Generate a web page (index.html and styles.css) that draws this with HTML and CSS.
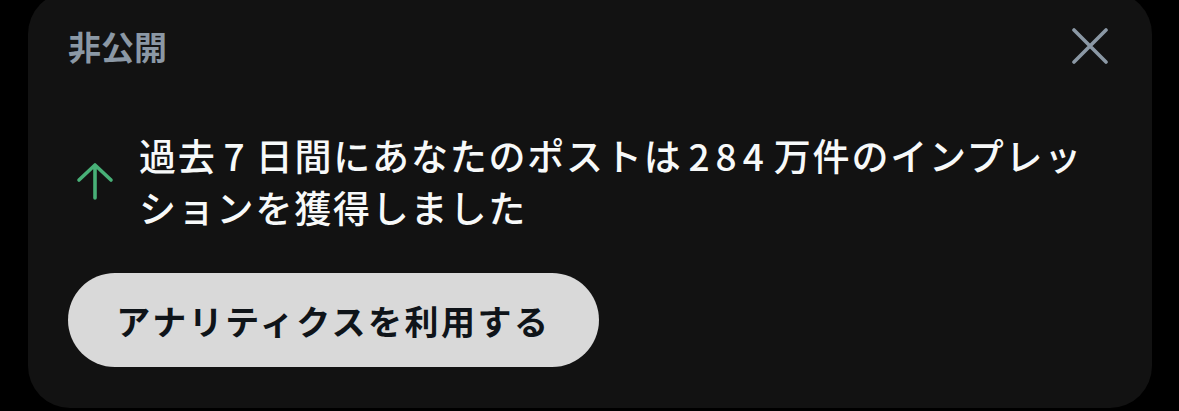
FILE: index.html
```html
<!DOCTYPE html>
<html lang="ja">
<head>
<meta charset="utf-8">
<link rel="stylesheet" href="styles.css">
</head>
<body>
<div class="card">
  <div class="header">
    <span class="label">非公開</span>
    <svg class="close" width="36" height="36" viewBox="0 0 36 36" aria-hidden="true">
      <path d="M2 2 L34 34 M34 2 L2 34" stroke="#8b98a5" stroke-width="3.6" stroke-linecap="round" fill="none"/>
    </svg>
  </div>
  <div class="message">
    <svg class="arrow" width="38" height="38" viewBox="0 0 38 38" aria-hidden="true">
      <path d="M19 36 V3 M3 18 L19 3 L35 18" stroke="#48b077" stroke-width="3.6" stroke-linecap="round" stroke-linejoin="round" fill="none"/>
    </svg>
    <p class="text">過去<span class="num single">7</span>日間にあなたのポストは<span class="num">284</span>万件のインプレッションを獲得しました</p>
  </div>
  <button class="cta">アナリティクスを利用する</button>
</div>
</body>
</html>
```

FILE: styles.css
```css
html, body {
  margin: 0;
  padding: 0;
  background: #000;
  height: 411px;
  overflow: hidden;
}
.card {
  box-sizing: border-box;
  margin: -8px 0 0 28px;
  width: 1124px;
  height: 416px;
  background: #121212;
  border-radius: 42px;
  padding: 34px 40px 0 40px;
  font-family: "Noto Sans CJK JP", "Noto Sans", sans-serif;
}
.header {
  display: flex;
  align-items: center;
  justify-content: space-between;
  height: 40px;
}
.label {
  font-size: 33px;
  font-weight: 700;
  line-height: 40px;
  color: #8b98a5;
}
.close {
  margin-right: 4px;
}
.message {
  display: flex;
  align-items: center;
  gap: 25px;
  margin-top: 63px;
  padding-left: 8px;
}
.arrow {
  flex: none;
}
.text {
  margin: 0;
  max-width: 960px;
  color: #f7f9f9;
  font-size: 37px;
  font-weight: 500;
  line-height: 52px;
  letter-spacing: 1.8px;
}
.num {
  letter-spacing: 6px;
  margin: 0 4px 0 6px;
}
.num.single {
  margin: 0 5px 0 7px;
}
.cta {
  display: block;
  margin-top: 40px;
  width: 531px;
  height: 94px;
  border: none;
  border-radius: 47px;
  background: #d9d9d9;
  color: #0f1419;
  font-family: "Noto Sans CJK JP", "Noto Sans", sans-serif;
  font-size: 34px;
  font-weight: 700;
  letter-spacing: 2.5px;
  padding: 0;
}
```
